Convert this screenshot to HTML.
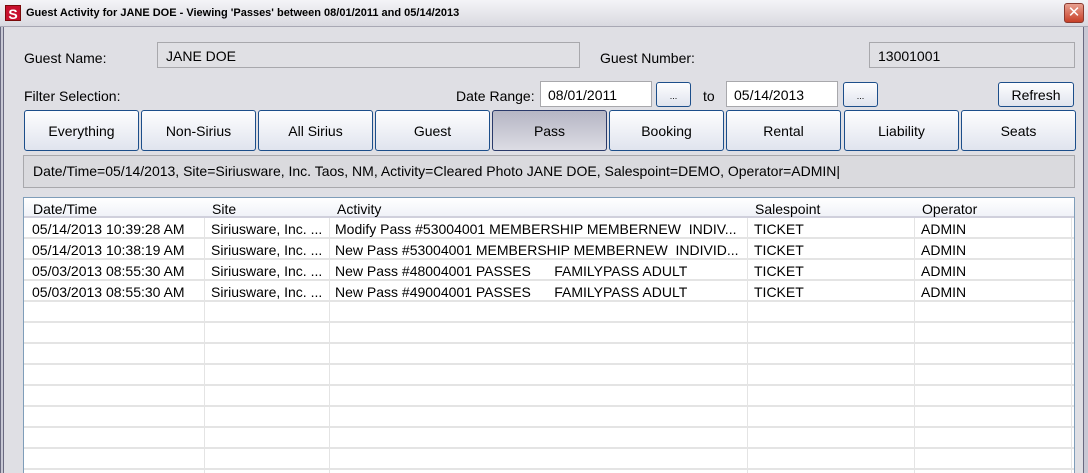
<!DOCTYPE html><html><head><style>
*{margin:0;padding:0;box-sizing:border-box}
body{width:1088px;height:473px;overflow:hidden;background:#dfdfe4;font-family:"Liberation Sans","DejaVu Sans",sans-serif;font-size:14px;color:#000;position:relative}
.a{position:absolute}
.title{left:0;top:0;width:1088px;height:27px;background:linear-gradient(#f4f4f7,#d9d9e0);border-bottom:1px solid #a8a8b4}
.tt{left:26px;top:7px;font-size:11px;font-weight:bold;white-space:nowrap}
.ic{left:5px;top:5px;width:16px;height:16px;background:#c8102e;color:#fff;font-weight:bold;font-size:14px;line-height:16px;text-align:center;border:1px solid #7a0a0a}
.cl{left:1064px;top:3px;width:20px;height:20px;border-radius:3px;background:linear-gradient(#e8a090,#c84028);border:1px solid #8a3a30;color:#fff;font-size:15px;line-height:18px;text-align:center;font-weight:bold}
.lb{left:0;top:27px;width:4px;height:446px;border-left:1px solid #6a6a80;border-right:1px solid #6a6a80;background:#c8c8d4}
.rb{left:1083px;top:27px;width:5px;height:446px;border-left:1px solid #6a6a80;background:#c8c8d4}
.fld{background:#e0e0e4;border:1px solid #a8a8ac;padding:5px 8px;line-height:16px}
.inp{background:#fff;border:1px solid #a8a8ac;padding:5px 7px;line-height:16px}
.btn{border:1px solid #1c4e8a;border-radius:3px;background:linear-gradient(#fdfdfe,#e0e4ee);text-align:center}
.fb{top:110px;width:115px;height:41px;line-height:41px;font-size:14px}
.sel{background:linear-gradient(#b6b6c4,#dcdce4);border-color:#2a3a6a}
.st{left:23px;top:155px;width:1052px;height:33px;border:1px solid #a8a8ac;background:#dadade;padding:7px 9px;white-space:nowrap}
.tbl{left:23px;top:197px;width:1052px;height:276px;border:1px solid #7f9db9;border-bottom:none;background:#fff;overflow:hidden}
.hd{height:20px;background:linear-gradient(#fff,#f0f2f8);border-bottom:2px solid #d0d0dc;position:relative}
.row{height:21px;border-bottom:2px solid #e4e4e4;position:relative}
.c{position:absolute;top:2px;white-space:nowrap;line-height:18px}
.vl{position:absolute;top:20px;width:1px;height:260px;background:#e4e4e4}
</style></head><body>
<div class="a title"></div>
<div class="a ic">S</div>
<div class="a tt">Guest Activity for JANE DOE - Viewing 'Passes' between 08/01/2011 and 05/14/2013</div>
<div class="a cl">✕</div>
<div class="a lb"></div><div class="a rb"></div>

<div class="a" style="left:24px;top:50px">Guest Name:</div>
<div class="a fld" style="left:157px;top:42px;width:423px;height:26px">JANE DOE</div>
<div class="a" style="left:600px;top:50px">Guest Number:</div>
<div class="a fld" style="left:869px;top:42px;width:206px;height:26px">13001001</div>

<div class="a" style="left:24px;top:88px">Filter Selection:</div>
<div class="a" style="left:456px;top:88px">Date Range:</div>
<div class="a inp" style="left:540px;top:81px;width:112px;height:26px">08/01/2011</div>
<div class="a btn" style="left:656px;top:82px;width:35px;height:25px;font-size:9px;line-height:26px">...</div>
<div class="a" style="left:703px;top:88px">to</div>
<div class="a inp" style="left:726px;top:81px;width:112px;height:26px">05/14/2013</div>
<div class="a btn" style="left:843px;top:82px;width:35px;height:25px;font-size:9px;line-height:26px">...</div>
<div class="a btn" style="left:998px;top:82px;width:76px;height:25px;line-height:24px">Refresh</div>

<div class="a btn fb" style="left:24px">Everything</div>
<div class="a btn fb" style="left:141px">Non-Sirius</div>
<div class="a btn fb" style="left:258px">All Sirius</div>
<div class="a btn fb" style="left:375px">Guest</div>
<div class="a btn fb sel" style="left:492px">Pass</div>
<div class="a btn fb" style="left:609px">Booking</div>
<div class="a btn fb" style="left:726px">Rental</div>
<div class="a btn fb" style="left:844px">Liability</div>
<div class="a btn fb" style="left:961px">Seats</div>

<div class="a st">Date/Time=05/14/2013, Site=Siriusware, Inc. Taos, NM, Activity=Cleared Photo JANE DOE, Salespoint=DEMO, Operator=ADMIN|</div>

<div class="a tbl">
<div class="hd"><span class="c" style="left:9px">Date/Time</span><span class="c" style="left:188px">Site</span><span class="c" style="left:313px">Activity</span><span class="c" style="left:731px">Salespoint</span><span class="c" style="left:898px">Operator</span></div>
<div class="row"><span class="c" style="left:8px">05/14/2013 10:39:28 AM</span><span class="c" style="left:187px">Siriusware, Inc. ...</span><span class="c" style="left:311px">Modify Pass #53004001 MEMBERSHIP MEMBERNEW&nbsp; INDIV...</span><span class="c" style="left:730px">TICKET</span><span class="c" style="left:897px">ADMIN</span></div>
<div class="row"><span class="c" style="left:8px">05/14/2013 10:38:19 AM</span><span class="c" style="left:187px">Siriusware, Inc. ...</span><span class="c" style="left:311px">New Pass #53004001 MEMBERSHIP MEMBERNEW&nbsp; INDIVID...</span><span class="c" style="left:730px">TICKET</span><span class="c" style="left:897px">ADMIN</span></div>
<div class="row"><span class="c" style="left:8px">05/03/2013 08:55:30 AM</span><span class="c" style="left:187px">Siriusware, Inc. ...</span><span class="c" style="left:311px">New Pass #48004001 PASSES&nbsp;&nbsp;&nbsp;&nbsp;&nbsp; FAMILYPASS ADULT</span><span class="c" style="left:730px">TICKET</span><span class="c" style="left:897px">ADMIN</span></div>
<div class="row"><span class="c" style="left:8px">05/03/2013 08:55:30 AM</span><span class="c" style="left:187px">Siriusware, Inc. ...</span><span class="c" style="left:311px">New Pass #49004001 PASSES&nbsp;&nbsp;&nbsp;&nbsp;&nbsp; FAMILYPASS ADULT</span><span class="c" style="left:730px">TICKET</span><span class="c" style="left:897px">ADMIN</span></div>
<div class="row"></div><div class="row"></div><div class="row"></div><div class="row"></div><div class="row"></div><div class="row"></div><div class="row"></div><div class="row"></div>
<div class="vl" style="left:180px"></div><div class="vl" style="left:305px"></div><div class="vl" style="left:723px"></div><div class="vl" style="left:890px"></div><div class="vl" style="left:1047px"></div>
</div>
</body></html>
